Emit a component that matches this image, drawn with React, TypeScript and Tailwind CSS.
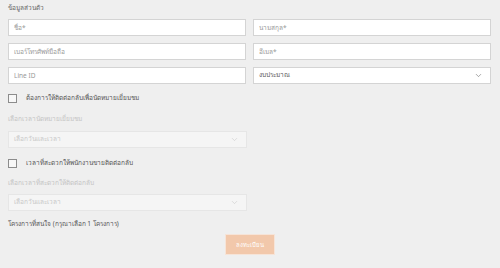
import { ChevronDown } from 'lucide-react'

const font = { fontFamily: '"Noto Sans", "Noto Sans CJK SC", sans-serif' }

function TextInput({ placeholder }: { placeholder: string }) {
  return (
    <input
      type="text"
      placeholder={placeholder}
      className="h-[17px] w-full border border-[#d4d4d4] bg-white px-[5px] text-[6.5px] leading-none text-[#555] outline-none placeholder:text-[#999]"
    />
  )
}

function SelectBox({ label, disabled }: { label: string; disabled?: boolean }) {
  return (
    <div
      className={
        disabled
          ? 'flex h-[17px] w-full items-center justify-between border border-[#e6e6e6] bg-[#f5f5f5] px-[5px]'
          : 'flex h-[17px] w-full items-center justify-between border border-[#d4d4d4] bg-white px-[5px]'
      }
    >
      <span className={disabled ? 'text-[6.5px] leading-none text-[#c8c8c8]' : 'text-[6.5px] leading-none text-[#555]'}>
        {label}
      </span>
      <ChevronDown
        size={9}
        strokeWidth={1.5}
        className={disabled ? 'mr-[2px] text-[#c8c8c8]' : 'mr-[2px] text-[#666]'}
      />
    </div>
  )
}

function Check({ label }: { label: string }) {
  return (
    <label className="flex items-center gap-[9px]">
      <span className="h-[9px] w-[9px] shrink-0 border border-[#8c8c8c] bg-[#f7f7f7]" />
      <span className="text-[6.5px] leading-none text-[#555]">{label}</span>
    </label>
  )
}

export default function App() {
  return (
    <div className="h-[268px] w-[500px] bg-[#efefef] px-[8px] pt-[4px]" style={font}>
      <p className="h-[8px] text-[6.5px] leading-[8px] text-[#666]">ข้อมูลส่วนตัว</p>

      <div className="mt-[7px] grid grid-cols-2 gap-x-[7px] gap-y-[7px] pr-[1px]">
        <TextInput placeholder="ชื่อ*" />
        <TextInput placeholder="นามสกุล*" />
        <TextInput placeholder="เบอร์โทรศัพท์มือถือ" />
        <TextInput placeholder="อีเมล*" />
        <TextInput placeholder="Line ID" />
        <SelectBox label="งบประมาณ" />
      </div>

      <div className="flex w-[239px] flex-col">
        <div className="mt-[10px]">
          <Check label="ต้องการให้ติดต่อกลับเพื่อนัดหมายเยี่ยมชม" />
        </div>
        <p className="mt-[12px] text-[6.5px] leading-[8px] text-[#c4c4c4]">เลือกเวลานัดหมายเยี่ยมชม</p>
        <div className="mt-[8px]">
          <SelectBox label="เลือกวันและเวลา" disabled />
        </div>
        <div className="mt-[11px]">
          <Check label="เวลาที่สะดวกให้พนักงานขายติดต่อกลับ" />
        </div>
        <p className="mt-[11px] text-[6.5px] leading-[8px] text-[#c4c4c4]">เลือกเวลาที่สะดวกให้ติดต่อกลับ</p>
        <div className="mt-[7px]">
          <SelectBox label="เลือกวันและเวลา" disabled />
        </div>
        <p className="mt-[9px] text-[6.5px] leading-[8px] text-[#555]">โครงการที่สนใจ (กรุณาเลือก 1 โครงการ)</p>
      </div>

      <div className="mt-[6px] flex justify-center">
        <button
          type="button"
          className="h-[21px] w-[50px] border border-[#f6e4d8] bg-[#f2c8ab] text-[6px] leading-none text-white"
        >
          ลงทะเบียน
        </button>
      </div>
    </div>
  )
}
